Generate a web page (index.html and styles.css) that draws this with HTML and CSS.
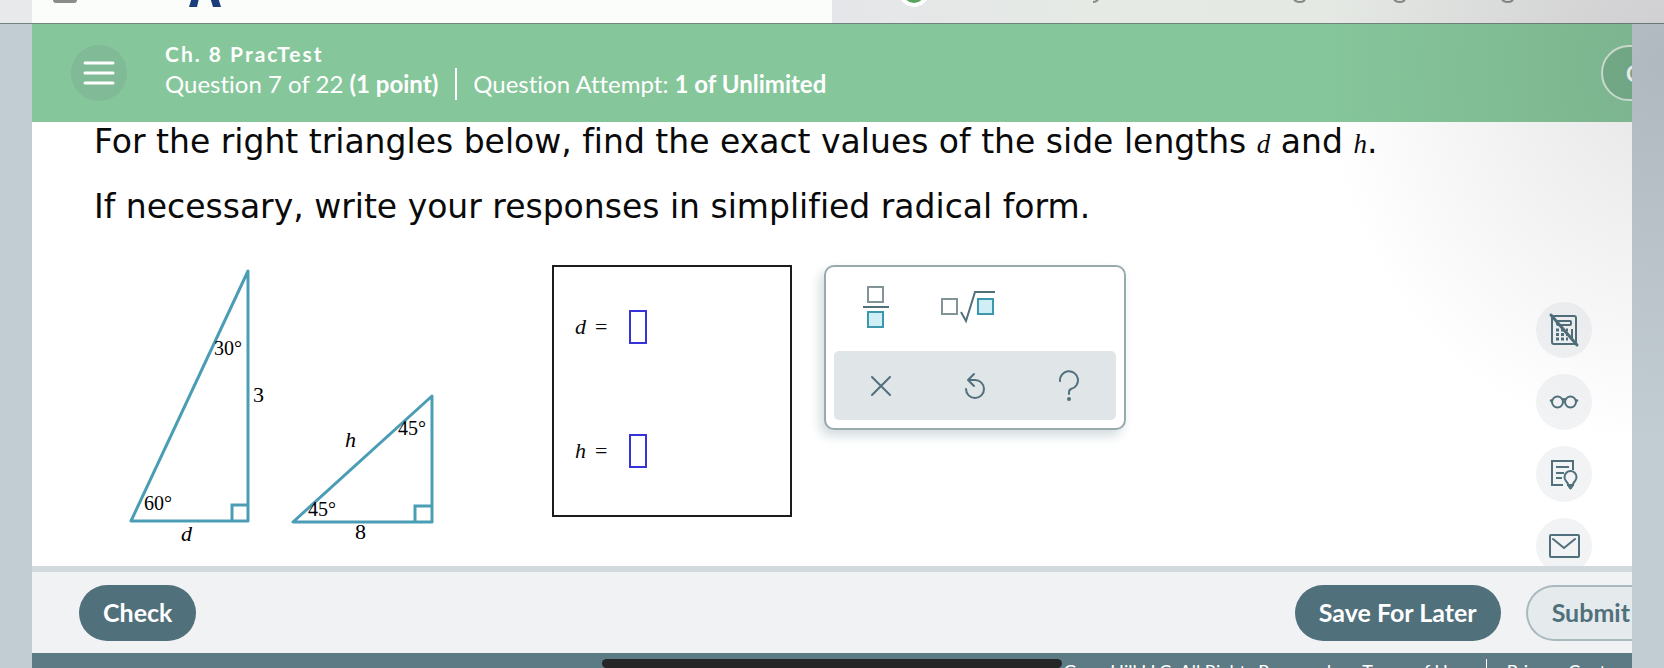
FILE: index.html
```html
<!DOCTYPE html>
<html lang="en">
<head>
<meta charset="utf-8">
<title>Ch. 8 PracTest</title>
<link rel="stylesheet" href="styles.css">
</head>
<body>
<div class="tabs">
  <div class="tab tab-edge"></div>
  <div class="tab tab-active">
    <svg class="tab-marks" width="200" height="8" viewBox="0 0 200 8" aria-hidden="true">
      <rect x="21" y="-17" width="24" height="20" rx="3" fill="#8c8c8c"/>
      <path d="M157 7L161-6H168L165 7ZM181 7L177-6H185L189 7Z" fill="#1c3d7c"/>
    </svg>
  </div>
  <div class="tab tab-idle">
    <svg class="tab-dot" width="28" height="8" viewBox="0 0 28 8" aria-hidden="true">
      <circle cx="14" cy="-8" r="15" fill="#fff"/><circle cx="14" cy="-8" r="11" fill="#57a45b"/>
    </svg>
    <svg class="tab-tails" width="430" height="6" viewBox="0 0 430 6" fill="none" stroke="#868a87" stroke-width="2" aria-hidden="true">
      <path d="M5 2q4 0 6-4M206-1q1 3 6 3t5-4M306-1q1 3 6 3t5-4M414-1q1 3 6 3t5-4"/>
    </svg>
  </div>
</div>

<div class="app">
  <header class="header">
    <button class="menu" aria-label="Menu">
      <svg width="32" height="24" viewBox="0 0 32 24" stroke="#fff" stroke-width="3" stroke-linecap="round"><path d="M2 2H30M2 12H30M2 22H30"/></svg>
    </button>
    <div class="titles">
      <h1 class="title">Ch. 8 PracTest</h1>
      <p class="meta">
        <span>Question 7 of 22 <b>(1 point)</b></span>
        <span class="attempt">Question Attempt: <b>1 of Unlimited</b></span>
      </p>
    </div>
    <button class="continue">C</button>
  </header>

  <main class="main">
    <div class="problem">
      <p class="line">For the right triangles below, find the exact values of the side lengths <i>d</i> and <i>h</i>.</p>
      <p class="line">If necessary, write your responses in simplified radical form.</p>
      <div class="work">
        <svg class="figure" width="318" height="282" viewBox="124 265 318 282" role="img" aria-label="Two right triangles">
          <g fill="none" stroke="#4a9db5" stroke-width="3">
            <path d="M131 521H248V271Z" stroke-linejoin="round"/>
            <path d="M232 521V505H248"/>
            <path d="M293 522H432V396Z" stroke-linejoin="round"/>
            <path d="M415 522V506H432"/>
          </g>
          <g class="angle">
            <text x="214" y="355">30°</text><text x="144" y="510">60°</text>
            <text x="398" y="435">45°</text><text x="308" y="516">45°</text>
          </g>
          <g class="side">
            <text x="253" y="402">3</text><text x="181" y="541" class="var">d</text>
            <text x="345" y="447" class="var">h</text><text x="355" y="539">8</text>
          </g>
        </svg>
        <div class="answers">
          <div class="answer"><label for="d"><i>d</i><span>=</span></label><input id="d" type="text"></div>
          <div class="answer"><label for="h"><i>h</i><span>=</span></label><input id="h" type="text"></div>
        </div>
        <div class="keypad">
          <div class="keys">
            <button class="key" aria-label="Fraction">
              <svg width="28" height="44" viewBox="0 0 28 44" fill="none" stroke-width="2">
                <rect x="6" y="2" width="15" height="15" stroke="#839499"/>
                <path d="M1 22H27" stroke="#50707b"/>
                <rect x="6" y="27" width="15" height="15" stroke="#3d97ad" fill="#cfeef5"/>
              </svg>
            </button>
            <button class="key" aria-label="Square root">
              <svg width="56" height="44" viewBox="0 0 56 44" fill="none" stroke-width="2">
                <rect x="2" y="14" width="15" height="15" stroke="#839499"/>
                <path d="M21 27L26 36L35 7H55" stroke="#50707b"/>
                <rect x="38" y="14" width="15" height="15" stroke="#3d97ad" fill="#cfeef5"/>
              </svg>
            </button>
          </div>
          <div class="actions">
            <button class="key" aria-label="Clear"><svg width="20" height="32" viewBox="0 0 20 32" fill="none" stroke="#50707b" stroke-width="2" stroke-linecap="round"><path d="M1 7L19 25M19 7L1 25"/></svg></button>
            <button class="key" aria-label="Undo"><svg width="22" height="32" viewBox="0 0 22 32" fill="none" stroke="#50707b" stroke-width="2" stroke-linecap="round" stroke-linejoin="round"><path d="M10 4L4 10L10 16M4 10H11A9 9 0 1 1 2 19"/></svg></button>
            <button class="key" aria-label="Help"><svg width="22" height="32" viewBox="0 0 22 32" fill="none" stroke="#50707b" stroke-width="2" stroke-linecap="round"><path d="M2 11A9 9 0 1 1 13 19Q11 20 11 22V24"/><circle cx="11" cy="29" r="1" fill="#50707b"/></svg></button>
          </div>
        </div>
      </div>
    </div>
    <nav class="tools" aria-label="Tools">
      <button class="tool" aria-label="Calculator off"><svg width="32" height="36" viewBox="0 0 32 36" fill="none" stroke="#50707b" stroke-width="2"><rect x="4" y="4" width="24" height="28" rx="2"/><rect x="9" y="9" width="14" height="4" rx="1"/><path d="M8 18H20M8 22.500H20M8 27H20" stroke-width="3" stroke-dasharray="3 2"/><path d="M24 17V28" stroke-width="2"/><path d="M3 3L29 33" stroke-width="3" stroke-linecap="round"/></svg></button>
      <button class="tool" aria-label="Reading view"><svg width="30" height="16" viewBox="0 0 30 16" fill="none" stroke="#50707b" stroke-width="2"><circle cx="8.500" cy="8" r="5.500"/><circle cx="21.500" cy="8" r="5.500"/><path d="M1 7L3 6M29 7L27 6M13 6Q15 4 17 6"/></svg></button>
      <button class="tool" aria-label="Hints"><svg width="30" height="32" viewBox="0 0 30 32" fill="none" stroke="#50707b" stroke-width="2"><path d="M14 27H3V3H24V12"/><path d="M7 9H20M7 15H15M7 20H13"/><path d="M19 27Q19 25 17 23A6 6 0 1 1 26 23Q24 25 24 27Z"/><path d="M19 28H24L22 31H21Z" fill="#50707b" stroke-width="1"/></svg></button>
      <button class="tool" aria-label="Message"><svg width="32" height="24" viewBox="0 0 32 24" fill="none" stroke="#50707b" stroke-width="2" stroke-linecap="round"><rect x="2" y="1" width="29" height="22" rx="1"/><path d="M5 5L16 14L27 5"/></svg></button>
    </nav>
  </main>

  <div class="bar">
    <button class="btn">Check</button>
    <div class="bar-right">
      <button class="btn">Save For Later</button>
      <button class="btn btn-light">Submit</button>
    </div>
  </div>

  <footer class="footer">
    <span>Graw Hill LLC. All Rights Reserved.</span>
    <a href="#">Terms of Use</a>
    <a href="#" class="split">Privacy Center</a>
  </footer>
</div>
<div class="shade"></div>
<div class="home"></div>
</body>
</html>
```
FILE: styles.css
```css
* { box-sizing: border-box; }
body {
  margin: 0;
  height: 100vh;
  display: flex;
  flex-direction: column;
  overflow: hidden;
  position: relative;
  background: #c2cdd3;
  font-family: Lato, "Liberation Sans", sans-serif;
  font-variant-ligatures: none;
}
button { font: inherit; border: 0; padding: 0; background: none; flex: none; }
h1, p { margin: 0; }
svg { display: block; }

.tabs { display: flex; flex: none; height: 24px; border-bottom: 1px solid #73827f; overflow: hidden; }
.tab-edge { width: 32px; background: #e8e9eb; }
.tab-active { flex: 800; background: #fafdfa; }
.tab-idle { flex: 832; display: flex; background: linear-gradient(90deg, #e5e6e9, #e5eae5 30%, #e5e9e4 60%, #e4e4e6); }
.tab-dot { margin-left: 68px; }
.tab-tails { margin-left: 160px; }

.app { flex: 1; min-height: 0; margin: 0 32px; display: flex; flex-direction: column; overflow: hidden; }

.header { display: flex; align-items: center; flex: none; height: 98px; padding-left: 39px; background: #86c69b; color: #fff; overflow: hidden; }
.menu { width: 56px; height: 56px; border-radius: 50%; background: #80ba96; display: grid; place-items: center; }
.titles { flex: 1; margin-left: 38px; padding-bottom: 6px; }
.title { font-size: 21px; line-height: 28px; font-weight: 700; letter-spacing: 2px; }
.meta { display: flex; font-size: 24px; line-height: 32px; white-space: nowrap; }
.attempt { margin-left: 17px; padding-left: 16px; border-left: 2px solid #fff; }
.continue { width: 120px; height: 56px; margin-right: -89px; border: 2px solid #d9ecdf; border-radius: 28px; padding-left: 23px; text-align: left; background: #7ab68f; color: #fff; font-size: 22px; font-weight: 700; }

.main { flex: 1; min-height: 0; display: flex; justify-content: space-between; overflow: hidden; background: #fff; }
.problem { padding: 1px 0 0 62px; color: #0a0a0a; font-family: Verdana, "DejaVu Sans", sans-serif; }
.line { font-size: 33px; line-height: 38px; margin-bottom: 27px; white-space: nowrap; }
.line i { font-family: "Liberation Serif", serif; font-size: 27px; line-height: 1; }
.work { display: flex; align-items: flex-start; margin-top: 39px; padding-left: 30px; }
.figure { flex: none; font-family: "Liberation Serif", serif; }
.angle { font-size: 20px; }
.side { font-size: 22px; }
.var { font-style: italic; }
.answers { flex: none; width: 240px; height: 252px; margin-left: 110px; padding: 42px 21px 46px; border: 2px solid #1c1c1c; display: flex; flex-direction: column; justify-content: space-between; font-family: "Liberation Serif", serif; font-size: 22px; }
.answer { display: flex; align-items: center; gap: 20px; height: 36px; }
.answer label { display: flex; gap: 9px; width: 34px; }
.answer input { width: 18px; height: 34px; padding: 0; border: 2px solid #3733d8; background: #fff; }
.keypad { flex: none; width: 302px; margin-left: 32px; padding: 8px; border: 2px solid #98aaae; border-radius: 10px; background: #fff; box-shadow: -4px 6px 12px #d3dcdf; }
.keys { display: flex; gap: 50px; height: 76px; padding: 10px 0 0 28px; align-items: flex-start; }
.actions { display: grid; grid-template-columns: repeat(3, 1fr); height: 69px; border-radius: 5px; background: #e0e5e8; place-items: center; }

.tools { display: flex; flex-direction: column; gap: 16px; padding: 180px 40px 0 0; }
.tool { width: 56px; height: 56px; border-radius: 50%; background: #f1f3f5; display: grid; place-items: center; }

.bar { display: flex; justify-content: space-between; align-items: center; flex: none; height: 87px; padding-left: 47px; border-top: 6px solid #d3dadd; background: #f0f2f4; overflow: hidden; }
.bar-right { display: flex; gap: 25px; margin-right: -24px; }
.btn { height: 56px; padding: 0 24px 2px; border-radius: 28px; background: #50707b; color: #fff; font-size: 25px; font-weight: 700; white-space: nowrap; }
.btn-light { padding-right: 26px; border: 2px solid #a9b9be; border-right: 0; border-radius: 28px 0 0 28px; background: #e5eaec; color: #50707b; }

.footer { display: flex; flex: none; height: 15px; padding: 6px 10px 0; justify-content: flex-end; gap: 21px; background: #5d7b84; color: #fff; font-size: 18px; line-height: 24px; white-space: nowrap; overflow: hidden; }
.footer span { margin-right: 6px; }
.footer a { color: inherit; text-decoration: none; }
.split { padding-left: 20px; border-left: 1px solid #fff; }

.home { position: absolute; left: 50%; bottom: 0; width: 460px; height: 9px; margin-left: -230px; border-radius: 5px; background: #262626; }
.shade { position: absolute; inset: 0; pointer-events: none; background: radial-gradient(ellipse 340px 380px at 100% 10%, rgba(30, 20, 30, 0.11), rgba(30, 20, 30, 0)); }
```
